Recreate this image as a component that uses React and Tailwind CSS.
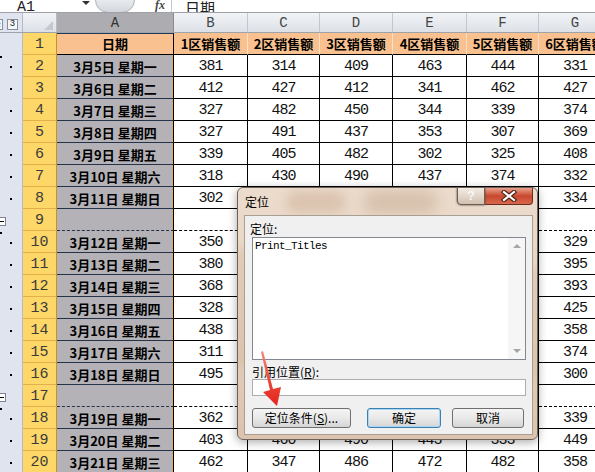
import React from 'react';

const mono = "font-['Liberation_Mono',monospace]";
const cjk = "font-['Noto_Sans_CJK_SC',sans-serif]";

const COLS = ['w-[74px]', 'w-[72px]', 'w-[73px]', 'w-[74px]', 'w-[72px]', 'w-[73px]'];
const LETTERS = ['B', 'C', 'D', 'E', 'F', 'G'];

const ROWS = [
  { n: 2, o: 'first', a: '3月5日 星期一', v: [381, 314, 409, 463, 444, 331] },
  { n: 3, o: 'dot', a: '3月6日 星期二', v: [412, 427, 412, 341, 462, 427] },
  { n: 4, o: 'dot', a: '3月7日 星期三', v: [327, 482, 450, 344, 339, 374] },
  { n: 5, o: 'dot', a: '3月8日 星期四', v: [327, 491, 437, 353, 307, 369] },
  { n: 6, o: 'dot', a: '3月9日 星期五', v: [339, 405, 482, 302, 325, 408] },
  { n: 7, o: 'dot', a: '3月10日 星期六', v: [318, 430, 490, 437, 374, 332] },
  { n: 8, o: 'dot', a: '3月11日 星期日', v: [302, 415, 366, 398, 451, 334] },
  { n: 9, o: 'box', pb: true },
  { n: 10, o: 'first', a: '3月12日 星期一', v: [350, 421, 377, 306, 462, 329] },
  { n: 11, o: 'dot', a: '3月13日 星期二', v: [380, 312, 449, 415, 338, 395] },
  { n: 12, o: 'dot', a: '3月14日 星期三', v: [368, 459, 401, 327, 386, 393] },
  { n: 13, o: 'dot', a: '3月15日 星期四', v: [328, 374, 466, 351, 410, 425] },
  { n: 14, o: 'dot', a: '3月16日 星期五', v: [438, 307, 325, 482, 369, 358] },
  { n: 15, o: 'dot', a: '3月17日 星期六', v: [311, 443, 398, 372, 455, 374] },
  { n: 16, o: 'dot', a: '3月18日 星期日', v: [495, 366, 412, 439, 301, 300] },
  { n: 17, o: 'box', pb: true },
  { n: 18, o: 'first', a: '3月19日 星期一', v: [362, 418, 357, 404, 376, 339] },
  { n: 19, o: 'dot', a: '3月20日 星期二', v: [403, 460, 490, 443, 333, 449] },
  { n: 20, o: 'dot', a: '3月21日 星期三', v: [462, 347, 486, 472, 482, 358] },
];

function TopBar() {
  return (
    <div className="flex h-[13px] items-end overflow-hidden border-b border-[#9ea2a8] bg-white">
      <div className="w-[80px] shrink-0">
        <span className={`ml-[17px] block text-[15px] leading-[15px] -mb-[3px] text-[#222] ${mono}`}>A1</span>
      </div>
      <div className="w-[15px] shrink-0 self-start pt-[1px]">
        <div className="ml-[2px] h-0 w-0 border-x-[4px] border-t-[4px] border-x-transparent border-t-[#333]" />
      </div>
      <div className="w-[40px] h-[26px] shrink-0 -mb-[1px] rounded-full border border-[#aeb2b8] bg-linear-to-b from-[#ffffff] to-[#d3d7dd]" />
      <div className="w-[36px] shrink-0 self-start pl-[20px] -mt-[4px] text-[12px] italic font-bold text-[#444] font-['Liberation_Serif',serif]">fx</div>
      <div className="w-[1px] h-full shrink-0 bg-[#c4c7cc]" />
      <span className="ml-[13px] text-[15px] leading-[15px] -mb-[3px] text-[#222]">日期</span>
    </div>
  );
}

function HeaderRow() {
  return (
    <div className="flex h-[20px] border-b border-[#9da3ab] bg-linear-to-b from-[#f1f3f6] to-[#dde1e7]">
      <div className="w-[23px] shrink-0 flex items-start pt-[6px] bg-[#dfe4ef] border-r border-[#b3bac8]">
        <span className={`-ml-[6px] w-[9px] h-[11px] border border-[#8a909a] bg-[#f4f6fa] text-[8px] leading-[9px] flex justify-center ${mono}`}>2</span>
        <span className={`ml-[4px] w-[11px] h-[11px] border border-[#8a909a] bg-[#f4f6fa] text-[9px] leading-[9px] flex justify-center text-[#222] ${mono}`}>3</span>
      </div>
      <div className="w-[34px] shrink-0 flex items-end justify-end pr-[3px] pb-[2px] border-r border-[#b8bcc2]">
        <div className="h-0 w-0 border-l-[9px] border-b-[9px] border-l-transparent border-b-[#c5c9cf]" />
      </div>
      <div className={`w-[117px] shrink-0 bg-[#adacb0] border-r border-[#8c8c90] flex justify-center pt-[3px] text-[14px] leading-[15px] text-[#333] ${mono}`}>A</div>
      {LETTERS.map((l, i) => (
        <div key={l} className={`${COLS[i]} shrink-0 border-r border-[#c4c8ce] flex justify-center pt-[3px] text-[14px] leading-[15px] text-[#444] ${mono}`}>{l}</div>
      ))}
    </div>
  );
}

function OutlineCell({ kind }) {
  return (
    <div className="relative w-[23px] shrink-0 flex items-center bg-[#dfe4ef] border-r border-[#b3bac8]">
      {kind === 'box' && (
        <span className="-ml-[3px] mt-[2px] w-[9px] h-[9px] border border-[#7d838f] bg-white flex items-center justify-center">
          <span className="w-[4px] h-[1px] bg-black" />
        </span>
      )}
      {(kind === 'dot' || kind === 'first') && <span className="ml-[10px] mt-[2px] w-[2px] h-[2px] bg-black" />}
      {kind === 'first' && <span className="absolute left-0 top-[1px] w-[2px] h-[2px] bg-black" />}
    </div>
  );
}

function RowHead({ n }) {
  return (
    <div className={`w-[34px] shrink-0 bg-[#fdd768] border-r border-r-[#c8902c] border-b border-b-[#e3ae4c] flex items-end justify-center pb-[1px] text-[15px] leading-[17px] text-[#3b3b3b] ${mono}`}>
      {n}
    </div>
  );
}

function TitleRow() {
  return (
    <div className="flex h-[22px]">
      <OutlineCell />
      <RowHead n={1} />
      <div className="w-[117px] shrink-0 bg-[#f8c18f] border-r border-r-black border-b border-b-black border-t border-t-[#203a5c] flex items-center justify-center text-[13px] font-bold">日期</div>
      {LETTERS.map((l, i) => (
        <div key={l} className={`${COLS[i]} shrink-0 bg-[#f8c18f] border-r border-r-[#fbe0c8] border-b border-b-black flex items-center justify-center text-[13px] font-bold whitespace-nowrap overflow-hidden`}>
          {i + 1}区销售额
        </div>
      ))}
    </div>
  );
}

function DataRow({ row }) {
  const dash = row.pb ? '[border-bottom-style:dashed]' : '';
  return (
    <div className="flex h-[22px]">
      <OutlineCell kind={row.o} />
      <RowHead n={row.n} />
      <div className={`w-[117px] shrink-0 bg-[#b4b2b6] border-r border-r-black border-b border-b-[#24324a] ${dash} shadow-[inset_-1px_0_0_#e6a35c] flex items-center justify-center pt-[2px] text-[13px] font-bold text-black whitespace-nowrap`}>
        {row.a}
      </div>
      {COLS.map((w, i) => (
        <div key={i} className={`${w} shrink-0 bg-white border-r border-r-black border-b border-b-black ${dash} flex items-center justify-center pt-[2px] text-[15px] leading-none tracking-[-1px] text-[#111] ${mono}`}>
          {row.v ? row.v[i] : ''}
        </div>
      ))}
    </div>
  );
}

function GotoDialog() {
  const btn = 'h-[20px] shrink-0 rounded-[3px] border flex items-center justify-center text-[12px] leading-none bg-linear-to-b from-[#f4f4f4] via-[#e9e9e9] to-[#d5d5d5]';
  return (
    <div className="absolute left-[237px] top-[187px] w-[301px] h-[253px] rounded-[6px] border border-[#6e6258] bg-linear-to-b from-[#ecdccd] via-[#e6d2c0] to-[#dcc3ad] shadow-[0_2px_10px_rgba(0,0,0,0.35)] overflow-hidden flex flex-col">
      <div className="absolute left-[48px] top-[3px] w-[60px] h-[22px] rounded-full bg-[#c4a184]/40 blur-[6px]" />
      <div className="absolute left-[125px] top-[2px] w-[75px] h-[24px] rounded-full bg-[#b99a80]/40 blur-[7px]" />
      <div className="absolute left-[0px] top-[60px] w-[8px] h-[120px] rounded-full bg-[#c9a88c]/40 blur-[4px]" />
      <div className="absolute right-[0px] top-[80px] w-[6px] h-[110px] rounded-full bg-[#c9a88c]/40 blur-[4px]" />

      <div className="relative flex h-[27px] items-start justify-between">
        <span className="ml-[7px] mt-[7px] text-[12px] leading-[14px] text-black">定位</span>
        <div className="flex -mt-[1px] mr-[4px]">
          <div className="w-[28px] h-[18px] rounded-bl-[4px] border border-[#6d5f55] bg-linear-to-b from-[#f3ebe3] via-[#e3d6ca] to-[#d2c0b0] flex items-center justify-center text-[13px] font-bold text-[#f8f8f8] [filter:drop-shadow(0_0_1px_#444)] font-['Liberation_Sans',sans-serif]">?</div>
          <div className="w-[48px] h-[18px] rounded-br-[4px] border border-l-0 border-[#6b2a1e] bg-linear-to-b from-[#e9a18c] via-[#c8472c] to-[#d9684c] flex items-center justify-center">
            <svg width="16" height="12" viewBox="0 0 16 12">
              <path d="M3 2 L13 10 M13 2 L3 10" stroke="#4a2218" strokeWidth="4.4" strokeLinecap="square" />
              <path d="M3 2 L13 10 M13 2 L3 10" stroke="#ffffff" strokeWidth="2.2" strokeLinecap="square" />
            </svg>
          </div>
        </div>
      </div>

      <div className="relative ml-[6px] mr-[4px] h-[220px] shrink-0 bg-[#f0f0f0] border border-[#a99e94] flex flex-col pl-[7px] pt-[5px] text-[12px] text-black">
        <div className="-ml-[2px] h-[16px] leading-[16px]">定位:</div>
        <div className="w-[274px] h-[123px] shrink-0 border border-[#828790] bg-white flex">
          <div className={`flex-1 pl-[2px] pt-[2px] text-[11px] leading-[12px] tracking-[-0.6px] text-black ${mono}`}>Print_Titles</div>
          <div className="w-[17px] flex flex-col justify-between bg-[#f6f6f6]">
            <div className="h-[16px] flex items-center justify-center">
              <div className="h-0 w-0 border-x-[4px] border-b-[4px] border-x-transparent border-b-[#a6a6a6]" />
            </div>
            <div className="h-[16px] flex items-center justify-center">
              <div className="h-0 w-0 border-x-[4px] border-t-[4px] border-x-transparent border-t-[#a6a6a6]" />
            </div>
          </div>
        </div>
        <div className="mt-[4px] h-[15px] leading-[15px]">引用位置(<span className="underline">R</span>):</div>
        <div className="w-[274px] h-[17px] shrink-0 border border-[#abadb3] bg-white" />
        <div className="mt-[12px] flex">
          <div className={`${btn} w-[99px] border-[#707070]`}>定位条件(<span className="underline">S</span>)...</div>
          <div className={`${btn} ml-[16px] w-[74px] border-[#3c7fb1] shadow-[inset_0_0_0_1px_#a8d8f5]`}>确定</div>
          <div className={`${btn} ml-[11px] w-[72px] border-[#707070]`}>取消</div>
        </div>
      </div>
    </div>
  );
}

function RedArrow() {
  return (
    <svg className="absolute left-0 top-0 pointer-events-none" width="595" height="472" viewBox="0 0 595 472">
      <defs>
        <linearGradient id="arrowFill" x1="0" y1="0" x2="0" y2="1">
          <stop offset="0" stopColor="#f08a7c" />
          <stop offset="0.5" stopColor="#ec4a3c" />
          <stop offset="1" stopColor="#e3241b" />
        </linearGradient>
      </defs>
      <polygon points="261,352 263,351 273,389 281,387 277,406 263,392 270,390" fill="url(#arrowFill)" />
    </svg>
  );
}

export default function App() {
  return (
    <div className={`relative w-[595px] h-[472px] overflow-hidden bg-white ${cjk}`}>
      <TopBar />
      <div className="w-[612px]">
        <HeaderRow />
        <TitleRow />
        {ROWS.map((r) => (
          <DataRow key={r.n} row={r} />
        ))}
      </div>
      <GotoDialog />
      <RedArrow />
    </div>
  );
}
